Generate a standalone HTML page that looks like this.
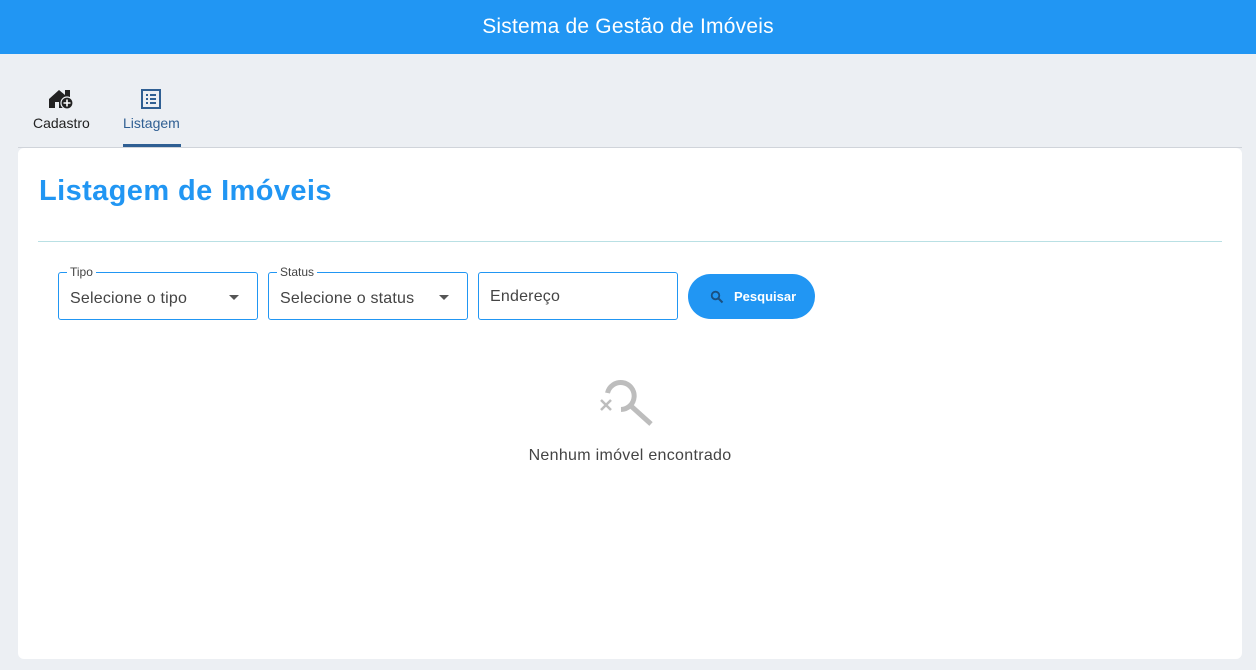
<!DOCTYPE html>
<html><head><meta charset="utf-8"><style>
*{box-sizing:border-box;margin:0;padding:0}
body{width:1256px;height:670px;background:#eceff3;font-family:"Liberation Sans",sans-serif;position:relative;overflow:hidden}
.hdr{position:absolute;left:0;top:0;width:1256px;height:54px;background:#2196f3;color:#fff;font-size:21px;text-align:center;line-height:54px;letter-spacing:0.2px}
.tab{position:absolute;top:88px;text-align:center;font-size:14px}
.card{position:absolute;left:18px;top:148px;width:1224px;height:511px;background:#fff;border-radius:6px}
.line{position:absolute;left:18px;top:147px;width:1224px;height:1px;background:#d0d4da}
h1{position:absolute;left:39px;top:175px;font-size:29px;color:#2196f3;font-weight:bold;letter-spacing:0.4px}
.div{position:absolute;left:38px;top:241px;width:1184px;height:1px;background:#b9e0e4}
.fld{position:absolute;top:272px;width:200px;height:48px;border:1px solid #2196f3;border-radius:3px;font-size:16px;color:#444;padding:17px 11px 0;letter-spacing:0.2px}
.lbl{position:absolute;top:-8px;left:8px;background:#fff;padding:0 3px;font-size:12px;color:#444;letter-spacing:0}
.arr{position:absolute;right:18px;top:22px;border-left:5px solid transparent;border-right:5px solid transparent;border-top:5px solid #555}
.btn{position:absolute;left:688px;top:274px;width:127px;height:45px;border-radius:23px;background:#2196f3;color:#fff;font-weight:bold;font-size:13px;line-height:45px;padding-left:46px}
</style></head><body>
<div class="hdr">Sistema de Gestão de Imóveis</div>
<div class="tab" style="left:33px;color:#222"><svg width="26" height="22" viewBox="0 0 26 22" style="display:block;margin:0 auto 5px"><path d="M1 11 L11 2 L17 7 V2 H22 V11 H15 V20 H1 Z" fill="#222"/><rect x="7" y="14" width="4" height="6" fill="#eceff3"/><circle cx="19" cy="15" r="6" fill="#222" stroke="#eceff3" stroke-width="1.2"/><path d="M19 11.5v7M15.5 15h7" stroke="#fff" stroke-width="1.6"/></svg>Cadastro</div>
<div class="tab" style="left:123px;color:#2f5f93"><svg width="22" height="22" viewBox="0 0 22 22" style="display:block;margin:0 auto 5px"><rect x="2" y="2" width="18" height="18" fill="none" stroke="#2f5f93" stroke-width="2"/><path d="M6 7h2M10 7h6M6 11h2M10 11h6M6 15h2M10 15h6" stroke="#2f5f93" stroke-width="2"/></svg>Listagem</div>
<div style="position:absolute;left:123px;top:144px;width:58px;height:3px;background:#2f5f93"></div>
<div class="line"></div>
<div class="card"></div>
<h1>Listagem de Imóveis</h1>
<div class="div"></div>
<div class="fld" style="left:58px"><span class="lbl">Tipo</span>Selecione o tipo<span class="arr"></span></div>
<div class="fld" style="left:268px"><span class="lbl">Status</span>Selecione o status<span class="arr"></span></div>
<div class="fld" style="left:478px;padding-top:15px">Endereço</div>
<div class="btn"><svg width="14" height="14" viewBox="0 0 14 14" style="position:absolute;left:22px;top:16px"><circle cx="5.5" cy="5.5" r="3.8" fill="none" stroke="#1a4f80" stroke-width="1.8"/><path d="M8.5 8.5L12.5 12.5" stroke="#1a4f80" stroke-width="2"/></svg>Pesquisar</div>
<svg width="60" height="52" viewBox="0 0 60 52" style="position:absolute;left:598px;top:376px"><path d="M9.5 17 A13.5 13.5 0 1 1 23 33.5" fill="none" stroke="#bdbdbd" stroke-width="5"/><path d="M33 30L53 48" stroke="#bdbdbd" stroke-width="5"/><path d="M3 24L13 34M13 24L3 34" stroke="#bdbdbd" stroke-width="2.5"/></svg>
<div style="position:absolute;left:0;width:1260px;top:447px;text-align:center;font-size:16px;color:#444;letter-spacing:0.3px">Nenhum imóvel encontrado</div>
</body></html>
